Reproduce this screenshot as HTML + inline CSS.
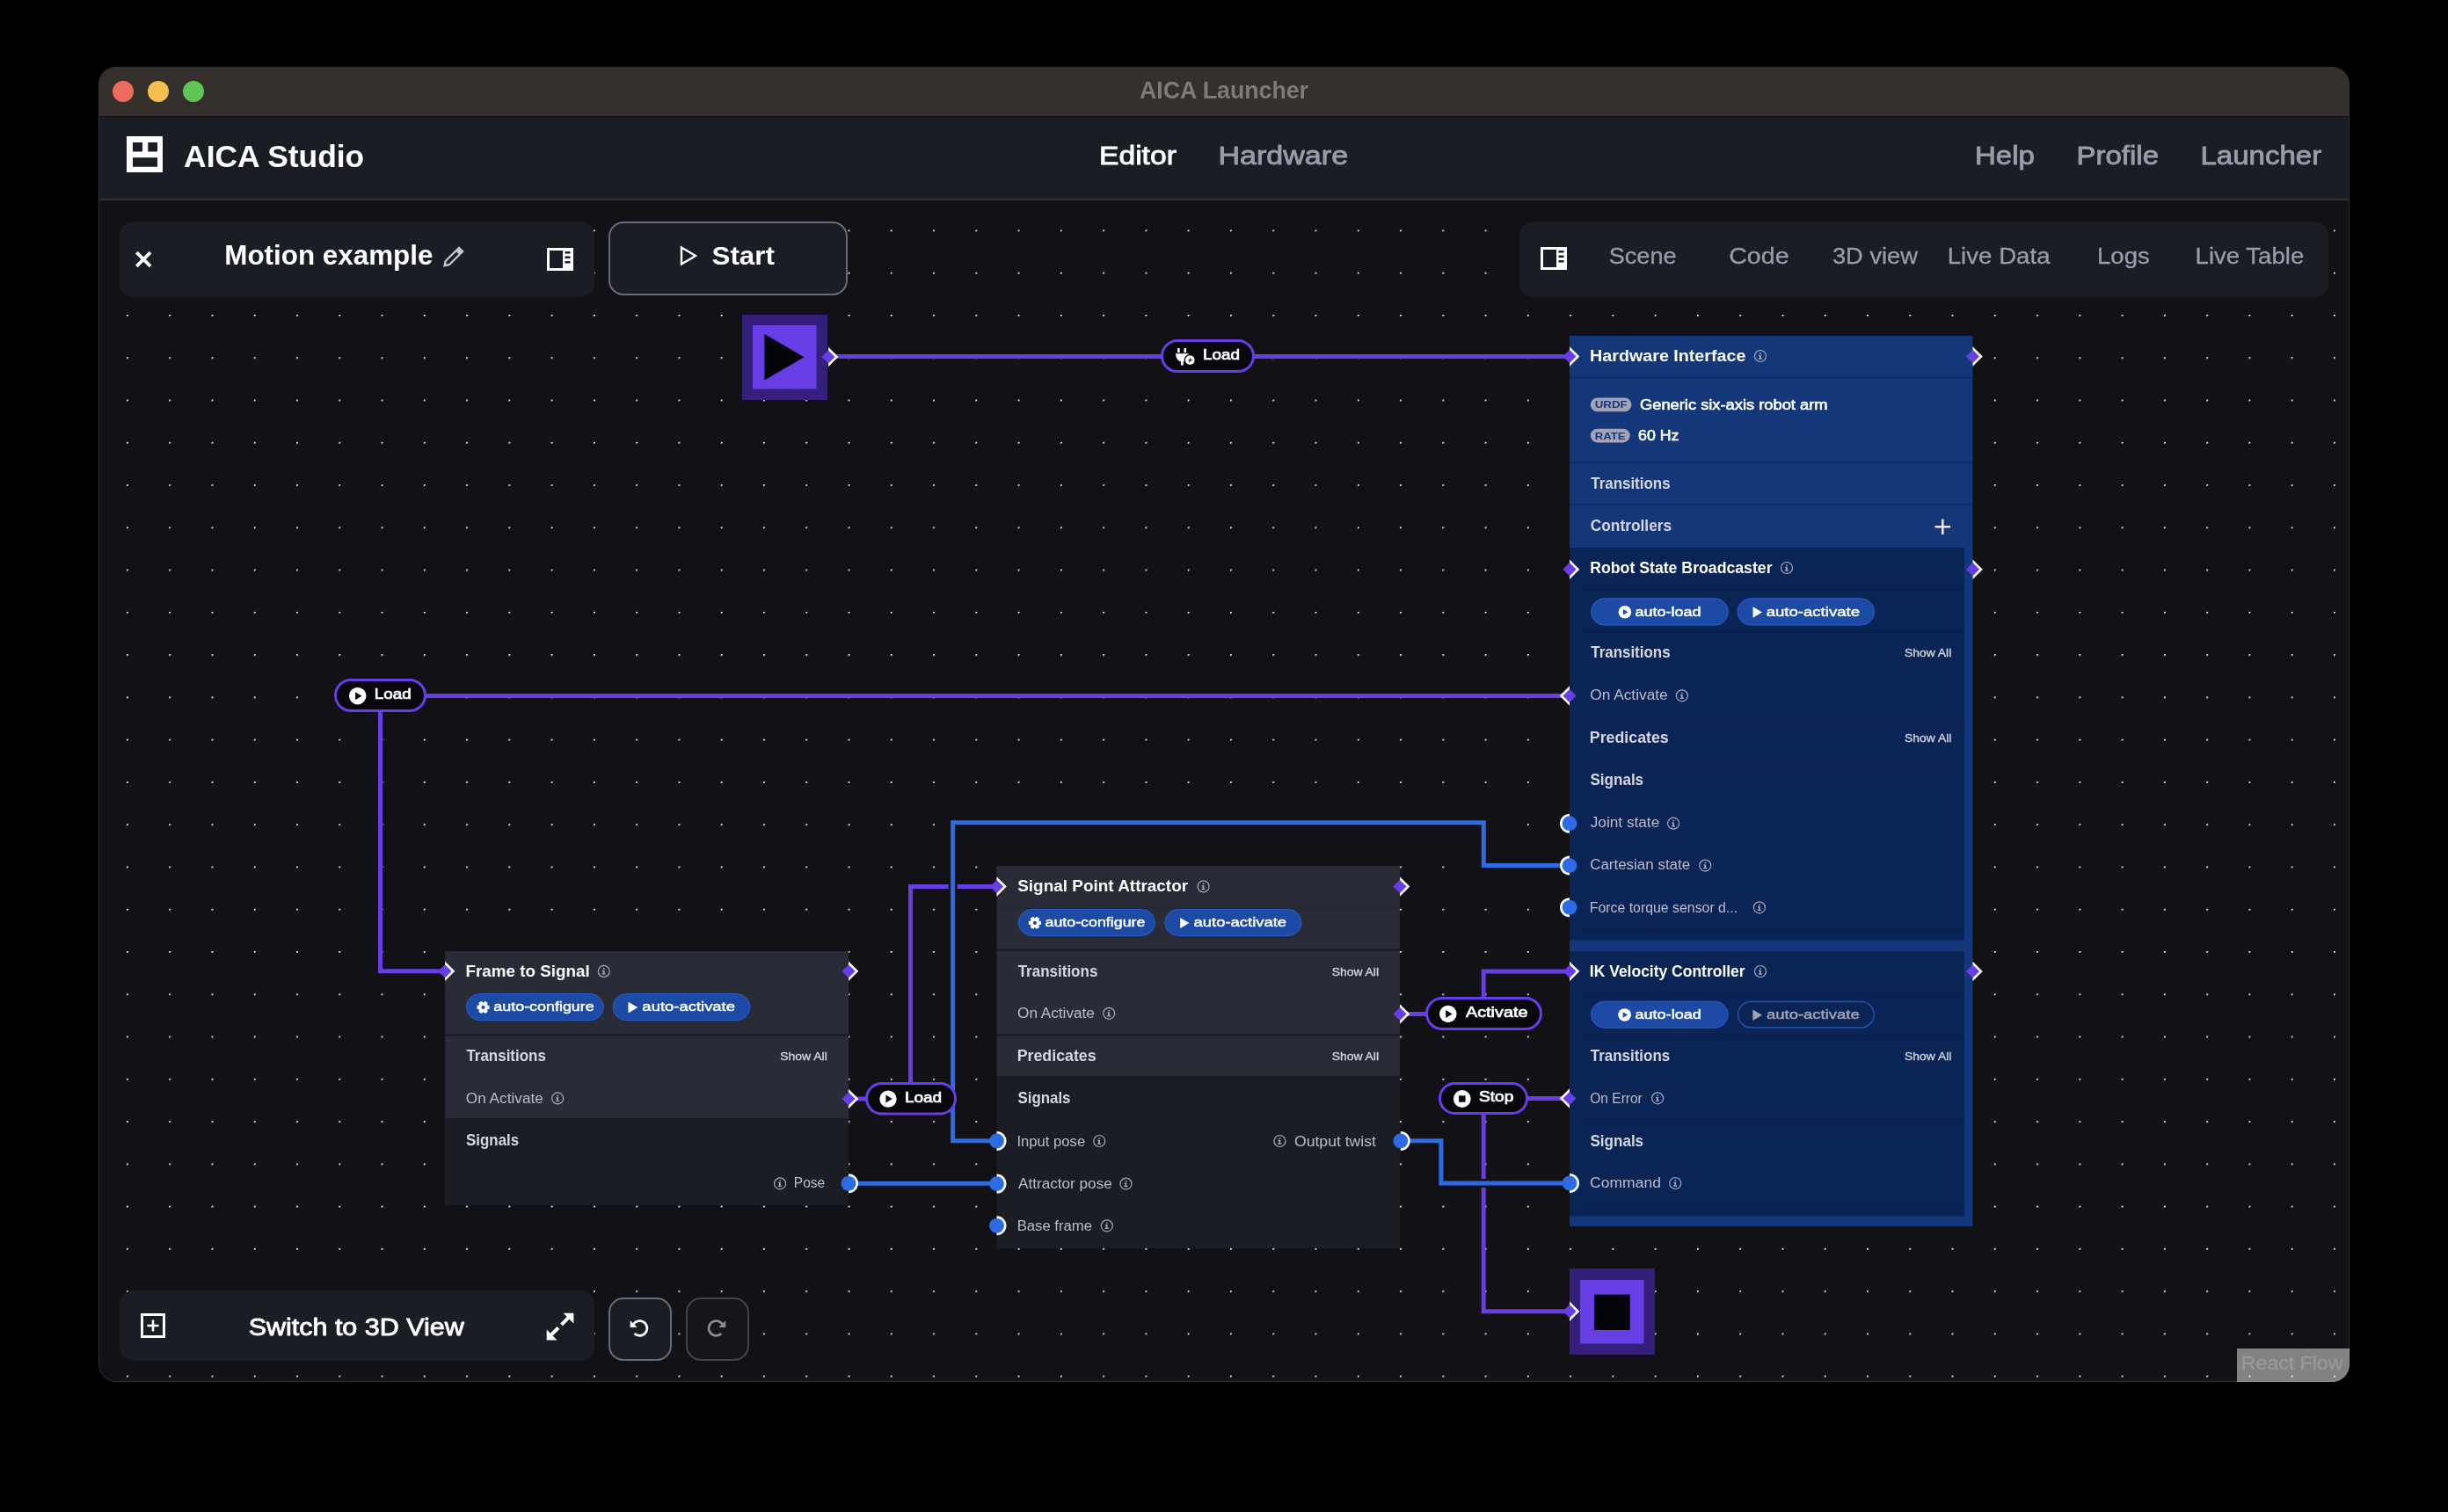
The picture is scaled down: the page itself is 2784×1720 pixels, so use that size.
<!DOCTYPE html><html><head><meta charset="utf-8"><style>html,body{margin:0;padding:0;background:#000;overflow:hidden}svg{display:block;will-change:transform}text{font-family:"Liberation Sans",sans-serif}</style></head><body>
<svg width="2784" height="1720" viewBox="0 0 2784 1720">
<defs>
<clipPath id="win"><rect x="112" y="76" width="2560" height="1496" rx="20"/></clipPath>
<pattern id="dots" x="144" y="358" width="48.27" height="48.27" patternUnits="userSpaceOnUse"><rect x="0" y="0" width="2" height="1" fill="#e8e8e8"/><rect x="0" y="1" width="1" height="1" fill="#e8e8e8"/><rect x="1" y="1" width="1" height="1" fill="#e8e8e8" fill-opacity="0.4"/></pattern>
</defs>
<rect x="0" y="0" width="2784.00" height="1720.00" fill="#000000"/>
<g clip-path="url(#win)">
<rect x="112" y="76" width="2560.00" height="57.00" fill="#36302d"/>
<rect x="112" y="76" width="2560.00" height="1.00" fill="#5b5652"/>
<rect x="112" y="132" width="2560.00" height="1.00" fill="#0c0c0c"/>
<rect x="112" y="133" width="2560.00" height="93.00" fill="#1b1d25"/>
<rect x="112" y="226" width="2560.00" height="2.00" fill="#2c2e38"/>
<rect x="112" y="228" width="2560.00" height="1344.00" fill="#111116"/>
<rect x="112" y="228" width="2560.00" height="1344.00" fill="url(#dots)"/>
</g>
<rect x="112.5" y="76.5" width="2559" height="1495" rx="20" fill="none" stroke="#2e2d31" stroke-width="1"/>
<circle cx="140" cy="104" r="12" fill="#ec6a5e"/>
<circle cx="180" cy="104" r="12" fill="#f4bf4f"/>
<circle cx="220" cy="104" r="12" fill="#61c554"/>
<text x="1295.93" y="111.90" font-size="27.47" font-weight="bold" fill="#7d7a77" textLength="192.10" lengthAdjust="spacingAndGlyphs">AICA Launcher</text>
<path fill="#fff" fill-rule="evenodd" d="M144 155h41v41h-41z M151 162v10.5h11v-10.5z M168.3 162v10.5h10.7v-10.5z M151 179.3v10.5h28v-10.5z"/>
<text x="209.12" y="190.40" font-size="35.76" font-weight="bold" fill="#fff" textLength="205.12" lengthAdjust="spacingAndGlyphs">AICA Studio</text>
<text x="1249.96" y="186.75" font-size="29.65" fill="#fff" stroke="#fff" stroke-width="0.90" stroke-linejoin="round" textLength="87.98" lengthAdjust="spacingAndGlyphs">Editor</text>
<text x="1385.43" y="186.75" font-size="29.65" fill="#9b9aab" stroke="#9b9aab" stroke-width="0.90" stroke-linejoin="round" textLength="147.66" lengthAdjust="spacingAndGlyphs">Hardware</text>
<text x="2246.01" y="186.55" font-size="29.65" fill="#9b9aab" stroke="#9b9aab" stroke-width="0.90" stroke-linejoin="round" textLength="67.92" lengthAdjust="spacingAndGlyphs">Help</text>
<text x="2361.51" y="186.55" font-size="29.65" fill="#9b9aab" stroke="#9b9aab" stroke-width="0.90" stroke-linejoin="round" textLength="93.51" lengthAdjust="spacingAndGlyphs">Profile</text>
<text x="2502.51" y="186.55" font-size="29.65" fill="#9b9aab" stroke="#9b9aab" stroke-width="0.90" stroke-linejoin="round" textLength="137.70" lengthAdjust="spacingAndGlyphs">Launcher</text>
<rect x="136" y="252" width="540.00" height="86.00" rx="16" fill="#1b1d25"/>
<path d="M155.3 287.1 L171.1 302.9 M171.1 287.1 L155.3 302.9" stroke="#fff" stroke-width="3.8" stroke-linecap="butt"/>
<text x="255.26" y="301.30" font-size="31.69" font-weight="bold" fill="#fff" textLength="237.20" lengthAdjust="spacingAndGlyphs">Motion example</text>
<path fill="#c2c1cf" fill-rule="evenodd" d="M504 303.8 L505.6 296.4 L522 280.2 L527.8 285.9 L511.6 302.1 Z M507.3 300.4 L507.7 297.4 L519 286.6 L521.6 288.9 L510.5 300 Z"/>
<g><rect x="623.5" y="283.5" width="27" height="23" fill="none" stroke="#fff" stroke-width="3"/><rect x="640" y="282" width="12" height="26" fill="#fff"/><rect x="642.5" y="286" width="6" height="2.5" fill="#1b1d25"/><rect x="642.5" y="291.5" width="6" height="2.5" fill="#1b1d25"/><rect x="642.5" y="297" width="6" height="2.5" fill="#1b1d25"/></g>
<rect x="693" y="253" width="270" height="82" rx="16" fill="#1b1d25" stroke="#6a697a" stroke-width="2"/>
<path d="M775 281.5 L791 291 L775 300.5 Z" fill="none" stroke="#fff" stroke-width="2.4" stroke-linejoin="miter"/>
<text x="809.56" y="301.30" font-size="29.51" font-weight="bold" fill="#fff" textLength="71.26" lengthAdjust="spacingAndGlyphs">Start</text>
<rect x="1728" y="252" width="920.00" height="86.00" rx="16" fill="#1b1d25"/>
<g><rect x="1753.5" y="282.5" width="27" height="23" fill="none" stroke="#fff" stroke-width="3"/><rect x="1770" y="281" width="12" height="26" fill="#fff"/><rect x="1772.5" y="285" width="6" height="2.5" fill="#1b1d25"/><rect x="1772.5" y="290.5" width="6" height="2.5" fill="#1b1d25"/><rect x="1772.5" y="296" width="6" height="2.5" fill="#1b1d25"/></g>
<text x="1829.73" y="299.95" font-size="26.31" fill="#9b9aab" stroke="#9b9aab" stroke-width="0.30" stroke-linejoin="round" textLength="76.85" lengthAdjust="spacingAndGlyphs">Scene</text>
<text x="1966.22" y="299.95" font-size="26.31" fill="#9b9aab" stroke="#9b9aab" stroke-width="0.30" stroke-linejoin="round" textLength="68.34" lengthAdjust="spacingAndGlyphs">Code</text>
<text x="2083.96" y="299.95" font-size="26.31" fill="#9b9aab" stroke="#9b9aab" stroke-width="0.30" stroke-linejoin="round" textLength="97.00" lengthAdjust="spacingAndGlyphs">3D view</text>
<text x="2214.74" y="299.95" font-size="26.31" fill="#9b9aab" stroke="#9b9aab" stroke-width="0.30" stroke-linejoin="round" textLength="116.80" lengthAdjust="spacingAndGlyphs">Live Data</text>
<text x="2385.05" y="299.95" font-size="26.31" fill="#9b9aab" stroke="#9b9aab" stroke-width="0.30" stroke-linejoin="round" textLength="59.73" lengthAdjust="spacingAndGlyphs">Logs</text>
<text x="2496.54" y="299.95" font-size="26.31" fill="#9b9aab" stroke="#9b9aab" stroke-width="0.30" stroke-linejoin="round" textLength="123.75" lengthAdjust="spacingAndGlyphs">Live Table</text>
<rect x="136" y="1468" width="540.00" height="80.00" rx="16" fill="#1b1d25"/>
<rect x="161.5" y="1495.5" width="25" height="25" fill="none" stroke="#fff" stroke-width="3"/>
<path d="M174 1501.5v13M167.5 1508h13" stroke="#fff" stroke-width="2.6"/>
<text x="282.68" y="1518.95" font-size="28.34" fill="#fff" stroke="#fff" stroke-width="0.90" stroke-linejoin="round" textLength="245.04" lengthAdjust="spacingAndGlyphs">Switch to 3D View</text>
<g fill="#fff"><path d="M640.6 1493.7 H652.4 V1505.5 Z"/><path d="M621.7 1512.6 V1524.4 H633.5 Z"/></g>
<path d="M638.6 1506.8 L646.5 1498.9 M634.9 1510.5 L627 1518.4" stroke="#fff" stroke-width="4"/>
<rect x="693" y="1477" width="70" height="70" rx="16" fill="#1b1d25" stroke="#6a697a" stroke-width="2"/>
<rect x="781" y="1477" width="70" height="70" rx="16" fill="#15161c" stroke="#42414c" stroke-width="2"/>
<path d="M720.23 1506.80 A8.4 8.4 0 1 1 721.56 1516.94" fill="none" stroke="#fff" stroke-width="2.7"/>
<path d="M716.7 1502.3 V1510 H724.7 Z" fill="#fff"/>
<path d="M821.72 1506.80 A8.4 8.4 0 1 0 820.39 1516.94" fill="none" stroke="#8c8c8c" stroke-width="2.7"/>
<path d="M825.25 1502.3 V1510 H817.25 Z" fill="#8c8c8c"/>
<path d="M2544 1534 H2672 V1552 A20 20 0 0 1 2652 1572 H2544 Z" fill="#ffffff" fill-opacity="0.48"/>
<text x="2548.85" y="1557.80" font-size="21.22" fill="#999999" stroke="#999999" stroke-width="0.40" stroke-linejoin="round" textLength="115.57" lengthAdjust="spacingAndGlyphs">React Flow</text>
<g fill="none" stroke="#673de6" stroke-width="5" stroke-linejoin="miter" stroke-linecap="butt">
<path d="M942 405.5 H1785"/>
<path d="M1785 791.5 H432.5 V1104.7 H506"/>
<path d="M965 1250 H1035.5 V1008.5 H1133.5"/>
<path d="M1592 1153.5 H1687.2 V1105 H1785"/>
<path d="M1785 1249.5 H1687.2 V1491.7 H1785"/>
</g>
<g fill="none" stroke="#111116" stroke-width="10" stroke-linejoin="miter">
<path d="M1785 984.6 H1687.3 V935.7 H1083.6 V1297.8 H1133.5"/>
<path d="M965 1346.3 H1133.5"/>
<path d="M1592.8 1297.8 H1638.9 V1345.9 H1785"/>
</g>
<g fill="none" stroke="#2d6be4" stroke-width="5" stroke-linejoin="miter">
<path d="M1785 984.6 H1687.3 V935.7 H1083.6 V1297.8 H1133.5"/>
<path d="M965 1346.3 H1133.5"/>
<path d="M1592.8 1297.8 H1638.9 V1345.9 H1785"/>
</g>
<rect x="844" y="358" width="97.00" height="97.00" fill="#341f7a"/>
<rect x="856" y="370" width="72.50" height="72.50" fill="#673de6"/>
<path d="M869.4 380 L914.6 406.2 L869.4 432.4Z" fill="#050409"/>
<rect x="1785" y="1443" width="97.00" height="98.00" fill="#341f7a"/>
<rect x="1797" y="1456" width="72.50" height="72.50" fill="#673de6"/>
<rect x="1813" y="1472.6" width="40.70" height="40.40" fill="#050409"/>
<rect x="506" y="1082" width="459.00" height="191.00" fill="#292b36"/>
<rect x="506" y="1273" width="459.00" height="98.00" fill="#1b1d25"/>
<rect x="506" y="1272.5" width="459.00" height="1.50" fill="#18191f"/>
<rect x="506" y="1129.5" width="459.00" height="1.00" fill="#24262f"/>
<rect x="506" y="1176.5" width="459.00" height="2.00" fill="#18191f"/>
<text x="529.38" y="1110.60" font-size="19.19" font-weight="bold" fill="#ffffff" textLength="141.28" lengthAdjust="spacingAndGlyphs">Frame to Signal</text>
<circle cx="686.8" cy="1104.9" r="6.5" fill="none" stroke="#a9a8ba" stroke-width="1.2"/>
<rect x="686.05" y="1101.20" width="1.6" height="1.5" fill="#a9a8ba"/>
<path d="M684.80 1103.70h2.8v3.7h1.1v1.2h-4.1v-1.2h1.2v-2.5h-1z" fill="#a9a8ba"/>
<rect x="530.5" y="1130.5" width="155.80" height="30.20" rx="15.10" fill="#1c4aa4" stroke="#2a5ccc" stroke-width="1"/>
<path d="M554.48 1143.58 L556.55 1144.01 L556.55 1147.79 L554.48 1148.22 L554.01 1149.05 L554.66 1151.06 L551.39 1152.95 L549.98 1151.38 L549.02 1151.38 L547.61 1152.95 L544.34 1151.06 L544.99 1149.05 L544.52 1148.22 L542.45 1147.79 L542.45 1144.01 L544.52 1143.58 L544.99 1142.75 L544.34 1140.74 L547.61 1138.85 L549.02 1140.42 L549.98 1140.42 L551.39 1138.85 L554.66 1140.74 L554.01 1142.75Z M551.60 1145.90 A2.1 2.1 0 1 0 547.40 1145.90 A2.1 2.1 0 1 0 551.60 1145.90Z" fill="#fff" fill-rule="evenodd"/>
<text x="561.31" y="1149.88" font-size="14.75" fill="#fff" stroke="#fff" stroke-width="0.45" stroke-linejoin="round" textLength="114.43" lengthAdjust="spacingAndGlyphs">auto-configure</text>
<rect x="697.1" y="1130.5" width="155.90" height="30.20" rx="15.10" fill="#1c4aa4" stroke="#2a5ccc" stroke-width="1"/>
<path d="M714.50 1139.73 L725.30 1146.10 L714.50 1152.47Z" fill="#fff"/>
<text x="730.39" y="1149.88" font-size="14.75" fill="#fff" stroke="#fff" stroke-width="0.45" stroke-linejoin="round" textLength="105.63" lengthAdjust="spacingAndGlyphs">auto-activate</text>
<text x="530.43" y="1206.90" font-size="17.73" font-weight="bold" fill="#d6d6e0" textLength="90.44" lengthAdjust="spacingAndGlyphs">Transitions</text>
<text x="887.25" y="1206.23" font-size="13.44" fill="#d3d3dc" stroke="#d3d3dc" stroke-width="0.35" stroke-linejoin="round" textLength="53.49" lengthAdjust="spacingAndGlyphs">Show All</text>
<text x="529.83" y="1254.50" font-size="16.42" fill="#bcbcc9" textLength="88.03" lengthAdjust="spacingAndGlyphs">On Activate</text>
<circle cx="634.2" cy="1249.4" r="6.5" fill="none" stroke="#a9a8ba" stroke-width="1.2"/>
<rect x="633.45" y="1245.70" width="1.6" height="1.5" fill="#a9a8ba"/>
<path d="M632.20 1248.20h2.8v3.7h1.1v1.2h-4.1v-1.2h1.2v-2.5h-1z" fill="#a9a8ba"/>
<text x="530.09" y="1303.30" font-size="17.73" font-weight="bold" fill="#d6d6e0" textLength="60.01" lengthAdjust="spacingAndGlyphs">Signals</text>
<text x="902.86" y="1350.90" font-size="16.42" fill="#bcbcc9" textLength="35.33" lengthAdjust="spacingAndGlyphs">Pose</text>
<circle cx="887.1" cy="1346.3" r="6.5" fill="none" stroke="#a9a8ba" stroke-width="1.2"/>
<rect x="886.35" y="1342.60" width="1.6" height="1.5" fill="#a9a8ba"/>
<path d="M885.10 1345.10h2.8v3.7h1.1v1.2h-4.1v-1.2h1.2v-2.5h-1z" fill="#a9a8ba"/>
<rect x="1133.5" y="985" width="458.50" height="240.00" fill="#292b36"/>
<rect x="1133.5" y="1225" width="458.50" height="195.00" fill="#1b1d25"/>
<rect x="1133.5" y="1224.3" width="458.50" height="1.50" fill="#18191f"/>
<rect x="1133.5" y="1032.8" width="458.50" height="1.00" fill="#24262f"/>
<rect x="1133.5" y="1079.5" width="458.50" height="2.00" fill="#18191f"/>
<rect x="1133.5" y="1176.5" width="458.50" height="2.00" fill="#18191f"/>
<text x="1157.23" y="1013.90" font-size="19.19" font-weight="bold" fill="#ffffff" textLength="193.88" lengthAdjust="spacingAndGlyphs">Signal Point Attractor</text>
<circle cx="1368.6" cy="1008.4" r="6.5" fill="none" stroke="#a9a8ba" stroke-width="1.2"/>
<rect x="1367.85" y="1004.70" width="1.6" height="1.5" fill="#a9a8ba"/>
<path d="M1366.60 1007.20h2.8v3.7h1.1v1.2h-4.1v-1.2h1.2v-2.5h-1z" fill="#a9a8ba"/>
<rect x="1158.3" y="1034.5" width="155.20" height="30.00" rx="15.00" fill="#1c4aa4" stroke="#2a5ccc" stroke-width="1"/>
<path d="M1181.88 1047.48 L1183.95 1047.91 L1183.95 1051.69 L1181.88 1052.12 L1181.41 1052.95 L1182.06 1054.96 L1178.79 1056.85 L1177.38 1055.28 L1176.42 1055.28 L1175.01 1056.85 L1171.74 1054.96 L1172.39 1052.95 L1171.92 1052.12 L1169.85 1051.69 L1169.85 1047.91 L1171.92 1047.48 L1172.39 1046.65 L1171.74 1044.64 L1175.01 1042.75 L1176.42 1044.32 L1177.38 1044.32 L1178.79 1042.75 L1182.06 1044.64 L1181.41 1046.65Z M1179.00 1049.80 A2.1 2.1 0 1 0 1174.80 1049.80 A2.1 2.1 0 1 0 1179.00 1049.80Z" fill="#fff" fill-rule="evenodd"/>
<text x="1188.51" y="1053.68" font-size="14.75" fill="#fff" stroke="#fff" stroke-width="0.45" stroke-linejoin="round" textLength="113.92" lengthAdjust="spacingAndGlyphs">auto-configure</text>
<rect x="1324.7" y="1034.5" width="155.30" height="30.00" rx="15.00" fill="#1c4aa4" stroke="#2a5ccc" stroke-width="1"/>
<path d="M1342.20 1043.98 L1352.40 1050.00 L1342.20 1056.02Z" fill="#fff"/>
<text x="1357.49" y="1053.68" font-size="14.75" fill="#fff" stroke="#fff" stroke-width="0.45" stroke-linejoin="round" textLength="105.63" lengthAdjust="spacingAndGlyphs">auto-activate</text>
<text x="1157.63" y="1110.50" font-size="17.73" font-weight="bold" fill="#d6d6e0" textLength="90.74" lengthAdjust="spacingAndGlyphs">Transitions</text>
<text x="1514.75" y="1109.83" font-size="13.44" fill="#d3d3dc" stroke="#d3d3dc" stroke-width="0.35" stroke-linejoin="round" textLength="53.29" lengthAdjust="spacingAndGlyphs">Show All</text>
<text x="1157.03" y="1157.90" font-size="16.42" fill="#bcbcc9" textLength="87.93" lengthAdjust="spacingAndGlyphs">On Activate</text>
<circle cx="1261.2" cy="1152.8" r="6.5" fill="none" stroke="#a9a8ba" stroke-width="1.2"/>
<rect x="1260.45" y="1149.10" width="1.6" height="1.5" fill="#a9a8ba"/>
<path d="M1259.20 1151.60h2.8v3.7h1.1v1.2h-4.1v-1.2h1.2v-2.5h-1z" fill="#a9a8ba"/>
<text x="1156.64" y="1206.90" font-size="17.73" font-weight="bold" fill="#d6d6e0" textLength="90.05" lengthAdjust="spacingAndGlyphs">Predicates</text>
<text x="1514.75" y="1206.23" font-size="13.44" fill="#d3d3dc" stroke="#d3d3dc" stroke-width="0.35" stroke-linejoin="round" textLength="53.29" lengthAdjust="spacingAndGlyphs">Show All</text>
<text x="1157.49" y="1255.20" font-size="17.73" font-weight="bold" fill="#d6d6e0" textLength="60.01" lengthAdjust="spacingAndGlyphs">Signals</text>
<text x="1156.50" y="1303.70" font-size="16.42" fill="#bcbcc9" textLength="77.65" lengthAdjust="spacingAndGlyphs">Input pose</text>
<circle cx="1250.2" cy="1298" r="6.5" fill="none" stroke="#a9a8ba" stroke-width="1.2"/>
<rect x="1249.45" y="1294.30" width="1.6" height="1.5" fill="#a9a8ba"/>
<path d="M1248.20 1296.80h2.8v3.7h1.1v1.2h-4.1v-1.2h1.2v-2.5h-1z" fill="#a9a8ba"/>
<text x="1472.01" y="1303.70" font-size="16.42" fill="#bcbcc9" textLength="92.86" lengthAdjust="spacingAndGlyphs">Output twist</text>
<circle cx="1455.4" cy="1298" r="6.5" fill="none" stroke="#a9a8ba" stroke-width="1.2"/>
<rect x="1454.65" y="1294.30" width="1.6" height="1.5" fill="#a9a8ba"/>
<path d="M1453.40 1296.80h2.8v3.7h1.1v1.2h-4.1v-1.2h1.2v-2.5h-1z" fill="#a9a8ba"/>
<text x="1158.00" y="1351.90" font-size="16.42" fill="#bcbcc9" textLength="106.78" lengthAdjust="spacingAndGlyphs">Attractor pose</text>
<circle cx="1280.5" cy="1346.6" r="6.5" fill="none" stroke="#a9a8ba" stroke-width="1.2"/>
<rect x="1279.75" y="1342.90" width="1.6" height="1.5" fill="#a9a8ba"/>
<path d="M1278.50 1345.40h2.8v3.7h1.1v1.2h-4.1v-1.2h1.2v-2.5h-1z" fill="#a9a8ba"/>
<text x="1156.66" y="1399.70" font-size="16.42" fill="#bcbcc9" textLength="85.34" lengthAdjust="spacingAndGlyphs">Base frame</text>
<circle cx="1258.8" cy="1394.3" r="6.5" fill="none" stroke="#a9a8ba" stroke-width="1.2"/>
<rect x="1258.05" y="1390.60" width="1.6" height="1.5" fill="#a9a8ba"/>
<path d="M1256.80 1393.10h2.8v3.7h1.1v1.2h-4.1v-1.2h1.2v-2.5h-1z" fill="#a9a8ba"/>
<rect x="1785" y="382" width="458.50" height="1013.00" fill="#14377a"/>
<rect x="1785" y="428.5" width="458.50" height="2.00" fill="#0f2b63"/>
<rect x="1785" y="525" width="458.50" height="2.00" fill="#0f2b63"/>
<rect x="1785" y="573" width="458.50" height="2.00" fill="#0f2b63"/>
<text x="1808.12" y="410.80" font-size="19.19" font-weight="bold" fill="#ffffff" textLength="177.25" lengthAdjust="spacingAndGlyphs">Hardware Interface</text>
<circle cx="2002" cy="405" r="6.5" fill="none" stroke="#a9a8ba" stroke-width="1.2"/>
<rect x="2001.25" y="401.30" width="1.6" height="1.5" fill="#a9a8ba"/>
<path d="M2000.00 403.80h2.8v3.7h1.1v1.2h-4.1v-1.2h1.2v-2.5h-1z" fill="#a9a8ba"/>
<rect x="1808.8" y="452.5" width="46.6" height="15.7" rx="7.85" fill="#a4a3b5"/>
<text x="1813.70" y="463.90" font-size="10.76" font-weight="bold" fill="#14377a" textLength="37.00" lengthAdjust="spacingAndGlyphs">URDF</text>
<text x="1864.99" y="465.70" font-size="16.42" fill="#fff" stroke="#fff" stroke-width="0.60" stroke-linejoin="round" textLength="213.51" lengthAdjust="spacingAndGlyphs">Generic six-axis robot arm</text>
<rect x="1808.8" y="487.8" width="44.9" height="15.6" rx="7.8" fill="#a4a3b5"/>
<text x="1813.85" y="499.80" font-size="10.76" font-weight="bold" fill="#14377a" textLength="34.65" lengthAdjust="spacingAndGlyphs">RATE</text>
<text x="1863.11" y="500.60" font-size="15.99" fill="#fff" stroke="#fff" stroke-width="0.60" stroke-linejoin="round" textLength="46.31" lengthAdjust="spacingAndGlyphs">60 Hz</text>
<text x="1809.23" y="555.60" font-size="17.73" font-weight="bold" fill="#d6d6e0" textLength="90.34" lengthAdjust="spacingAndGlyphs">Transitions</text>
<text x="1808.71" y="603.70" font-size="17.73" font-weight="bold" fill="#d6d6e0" textLength="92.47" lengthAdjust="spacingAndGlyphs">Controllers</text>
<path d="M2209.3 590.5 V608.1 M2200.5 599.3 H2218.1" stroke="#e6e6ee" stroke-width="2.6"/>
<rect x="1785" y="623" width="449.00" height="446.50" fill="#0b2456"/>
<rect x="1795" y="670.5" width="439.00" height="1.00" fill="#0a1e48"/>
<rect x="1795" y="719" width="439.00" height="1.00" fill="#0a1e48"/>
<rect x="1795" y="815.8" width="439.00" height="1.00" fill="#0a1e48"/>
<rect x="1795" y="863.6" width="439.00" height="1.00" fill="#0a1e48"/>
<rect x="1795" y="1056.5" width="439.00" height="1.00" fill="#0a1e48"/>
<text x="1808.25" y="652.40" font-size="19.19" font-weight="bold" fill="#ffffff" textLength="207.31" lengthAdjust="spacingAndGlyphs">Robot State Broadcaster</text>
<circle cx="2032" cy="646" r="6.5" fill="none" stroke="#a9a8ba" stroke-width="1.2"/>
<rect x="2031.25" y="642.30" width="1.6" height="1.5" fill="#a9a8ba"/>
<path d="M2030.00 644.80h2.8v3.7h1.1v1.2h-4.1v-1.2h1.2v-2.5h-1z" fill="#a9a8ba"/>
<rect x="1809.5" y="680.8" width="155.90" height="30.30" rx="15.15" fill="#1c4aa4" stroke="#2a5ccc" stroke-width="1"/>
<circle cx="1847.9" cy="696.25" r="7.3" fill="#fff"/>
<path d="M1845.95 692.88 L1851.49 696.25 L1845.95 699.62Z" fill="#1c4aa4"/>
<text x="1859.51" y="700.68" font-size="14.75" fill="#fff" stroke="#fff" stroke-width="0.45" stroke-linejoin="round" textLength="75.04" lengthAdjust="spacingAndGlyphs">auto-load</text>
<rect x="1976.0" y="680.8" width="155.60" height="30.30" rx="15.15" fill="#1c4aa4" stroke="#2a5ccc" stroke-width="1"/>
<path d="M1993.50 690.25 L2004.00 696.45 L1993.50 702.65Z" fill="#fff"/>
<text x="2008.68" y="700.68" font-size="14.75" fill="#fff" stroke="#fff" stroke-width="0.45" stroke-linejoin="round" textLength="106.34" lengthAdjust="spacingAndGlyphs">auto-activate</text>
<text x="1809.23" y="748.30" font-size="17.73" font-weight="bold" fill="#d6d6e0" textLength="90.34" lengthAdjust="spacingAndGlyphs">Transitions</text>
<text x="2165.95" y="746.93" font-size="13.44" fill="#d3d3dc" stroke="#d3d3dc" stroke-width="0.35" stroke-linejoin="round" textLength="53.29" lengthAdjust="spacingAndGlyphs">Show All</text>
<text x="1808.22" y="796.20" font-size="16.42" fill="#bcbcc9" textLength="88.54" lengthAdjust="spacingAndGlyphs">On Activate</text>
<circle cx="1912.9" cy="791.3" r="6.5" fill="none" stroke="#a9a8ba" stroke-width="1.2"/>
<rect x="1912.15" y="787.60" width="1.6" height="1.5" fill="#a9a8ba"/>
<path d="M1910.90 790.10h2.8v3.7h1.1v1.2h-4.1v-1.2h1.2v-2.5h-1z" fill="#a9a8ba"/>
<text x="1807.84" y="844.50" font-size="17.73" font-weight="bold" fill="#d6d6e0" textLength="89.94" lengthAdjust="spacingAndGlyphs">Predicates</text>
<text x="2166.05" y="843.73" font-size="13.44" fill="#d3d3dc" stroke="#d3d3dc" stroke-width="0.35" stroke-linejoin="round" textLength="53.29" lengthAdjust="spacingAndGlyphs">Show All</text>
<text x="1808.49" y="893.30" font-size="17.73" font-weight="bold" fill="#d6d6e0" textLength="60.62" lengthAdjust="spacingAndGlyphs">Signals</text>
<text x="1808.74" y="941.20" font-size="16.42" fill="#bcbcc9" textLength="78.49" lengthAdjust="spacingAndGlyphs">Joint state</text>
<circle cx="1903.1" cy="936.7" r="6.5" fill="none" stroke="#a9a8ba" stroke-width="1.2"/>
<rect x="1902.35" y="933.00" width="1.6" height="1.5" fill="#a9a8ba"/>
<path d="M1901.10 935.50h2.8v3.7h1.1v1.2h-4.1v-1.2h1.2v-2.5h-1z" fill="#a9a8ba"/>
<text x="1808.15" y="989.10" font-size="16.42" fill="#bcbcc9" textLength="114.02" lengthAdjust="spacingAndGlyphs">Cartesian state</text>
<circle cx="1939.3" cy="984.6" r="6.5" fill="none" stroke="#a9a8ba" stroke-width="1.2"/>
<rect x="1938.55" y="980.90" width="1.6" height="1.5" fill="#a9a8ba"/>
<path d="M1937.30 983.40h2.8v3.7h1.1v1.2h-4.1v-1.2h1.2v-2.5h-1z" fill="#a9a8ba"/>
<text x="1807.73" y="1037.90" font-size="16.42" fill="#bcbcc9" textLength="168.42" lengthAdjust="spacingAndGlyphs">Force torque sensor d...</text>
<circle cx="2000.9" cy="1032.3" r="6.5" fill="none" stroke="#a9a8ba" stroke-width="1.2"/>
<rect x="2000.15" y="1028.60" width="1.6" height="1.5" fill="#a9a8ba"/>
<path d="M1998.90 1031.10h2.8v3.7h1.1v1.2h-4.1v-1.2h1.2v-2.5h-1z" fill="#a9a8ba"/>
<rect x="1785" y="1082" width="449.00" height="301.50" fill="#0b2456"/>
<rect x="1795" y="1129.8" width="439.00" height="1.00" fill="#0a1e48"/>
<rect x="1795" y="1177.6" width="439.00" height="1.00" fill="#0a1e48"/>
<rect x="1795" y="1274.4" width="439.00" height="1.00" fill="#0a1e48"/>
<rect x="1795" y="1371" width="439.00" height="1.00" fill="#0a1e48"/>
<text x="1807.86" y="1111.30" font-size="19.19" font-weight="bold" fill="#ffffff" textLength="176.77" lengthAdjust="spacingAndGlyphs">IK Velocity Controller</text>
<circle cx="2002" cy="1105" r="6.5" fill="none" stroke="#a9a8ba" stroke-width="1.2"/>
<rect x="2001.25" y="1101.30" width="1.6" height="1.5" fill="#a9a8ba"/>
<path d="M2000.00 1103.80h2.8v3.7h1.1v1.2h-4.1v-1.2h1.2v-2.5h-1z" fill="#a9a8ba"/>
<rect x="1809.5" y="1139.2" width="155.70" height="30.00" rx="15.00" fill="#1c4aa4" stroke="#2a5ccc" stroke-width="1"/>
<circle cx="1847.6" cy="1154.5" r="7.3" fill="#fff"/>
<path d="M1845.65 1151.13 L1851.19 1154.50 L1845.65 1157.87Z" fill="#1c4aa4"/>
<text x="1859.50" y="1158.78" font-size="14.75" fill="#fff" stroke="#fff" stroke-width="0.45" stroke-linejoin="round" textLength="75.25" lengthAdjust="spacingAndGlyphs">auto-load</text>
<rect x="1976.55" y="1139.45" width="154.70" height="29.50" rx="14.75" fill="none" stroke="#2150b0" stroke-width="1.5"/>
<path d="M1993.40 1148.45 L2004.00 1154.70 L1993.40 1160.95Z" fill="#a3a2b3"/>
<text x="2008.99" y="1158.78" font-size="14.75" fill="#a3a2b3" stroke="#a3a2b3" stroke-width="0.45" stroke-linejoin="round" textLength="105.73" lengthAdjust="spacingAndGlyphs">auto-activate</text>
<text x="1808.83" y="1207.30" font-size="17.73" font-weight="bold" fill="#d6d6e0" textLength="90.34" lengthAdjust="spacingAndGlyphs">Transitions</text>
<text x="2166.05" y="1206.42" font-size="13.44" fill="#d3d3dc" stroke="#d3d3dc" stroke-width="0.35" stroke-linejoin="round" textLength="53.29" lengthAdjust="spacingAndGlyphs">Show All</text>
<text x="1808.30" y="1254.50" font-size="16.42" fill="#bcbcc9" textLength="59.50" lengthAdjust="spacingAndGlyphs">On Error</text>
<circle cx="1885.1" cy="1249.3" r="6.5" fill="none" stroke="#a9a8ba" stroke-width="1.2"/>
<rect x="1884.35" y="1245.60" width="1.6" height="1.5" fill="#a9a8ba"/>
<path d="M1883.10 1248.10h2.8v3.7h1.1v1.2h-4.1v-1.2h1.2v-2.5h-1z" fill="#a9a8ba"/>
<text x="1808.49" y="1303.50" font-size="17.73" font-weight="bold" fill="#d6d6e0" textLength="60.62" lengthAdjust="spacingAndGlyphs">Signals</text>
<text x="1808.12" y="1351.10" font-size="16.42" fill="#bcbcc9" textLength="80.77" lengthAdjust="spacingAndGlyphs">Command</text>
<circle cx="1905.3" cy="1346" r="6.5" fill="none" stroke="#a9a8ba" stroke-width="1.2"/>
<rect x="1904.55" y="1342.30" width="1.6" height="1.5" fill="#a9a8ba"/>
<path d="M1903.30 1344.80h2.8v3.7h1.1v1.2h-4.1v-1.2h1.2v-2.5h-1z" fill="#a9a8ba"/>
<path d="M942 394.7 L953.3 406 L942 417.3Z" fill="#fff"/>
<path d="M942 398.4 L949.6 406 L942 413.6 L934.4 406Z" fill="#673de6"/>
<path d="M1785 394.2 L1796.3 405.5 L1785 416.8Z" fill="#fff"/>
<path d="M1785 397.9 L1792.6 405.5 L1785 413.1 L1777.4 405.5Z" fill="#673de6"/>
<path d="M2243.5 394.2 L2254.8 405.5 L2243.5 416.8Z" fill="#fff"/>
<path d="M2243.5 397.9 L2251.1 405.5 L2243.5 413.1 L2235.9 405.5Z" fill="#673de6"/>
<path d="M1785 636.4000000000001 L1796.3 647.7 L1785 659.0Z" fill="#fff"/>
<path d="M1785 640.1 L1792.6 647.7 L1785 655.3000000000001 L1777.4 647.7Z" fill="#673de6"/>
<path d="M2243.5 636.4000000000001 L2254.8 647.7 L2243.5 659.0Z" fill="#fff"/>
<path d="M2243.5 640.1 L2251.1 647.7 L2243.5 655.3000000000001 L2235.9 647.7Z" fill="#673de6"/>
<path d="M1785 780.2 L1773.7 791.5 L1785 802.8Z" fill="#fff"/>
<path d="M1785 783.9 L1792.6 791.5 L1785 799.1 L1777.4 791.5Z" fill="#673de6"/>
<path d="M1785 1093.7 L1796.3 1105 L1785 1116.3Z" fill="#fff"/>
<path d="M1785 1097.4 L1792.6 1105 L1785 1112.6 L1777.4 1105Z" fill="#673de6"/>
<path d="M2243.5 1093.7 L2254.8 1105 L2243.5 1116.3Z" fill="#fff"/>
<path d="M2243.5 1097.4 L2251.1 1105 L2243.5 1112.6 L2235.9 1105Z" fill="#673de6"/>
<path d="M1785 1238.2 L1773.7 1249.5 L1785 1260.8Z" fill="#fff"/>
<path d="M1785 1241.9 L1792.6 1249.5 L1785 1257.1 L1777.4 1249.5Z" fill="#673de6"/>
<path d="M1133.5 997.2 L1144.8 1008.5 L1133.5 1019.8Z" fill="#fff"/>
<path d="M1133.5 1000.9 L1141.1 1008.5 L1133.5 1016.1 L1125.9 1008.5Z" fill="#673de6"/>
<path d="M1592 997.2 L1603.3 1008.5 L1592 1019.8Z" fill="#fff"/>
<path d="M1592 1000.9 L1599.6 1008.5 L1592 1016.1 L1584.4 1008.5Z" fill="#673de6"/>
<path d="M1592 1142.2 L1603.3 1153.5 L1592 1164.8Z" fill="#fff"/>
<path d="M1592 1145.9 L1599.6 1153.5 L1592 1161.1 L1584.4 1153.5Z" fill="#673de6"/>
<path d="M506 1093.5 L517.3 1104.8 L506 1116.1Z" fill="#fff"/>
<path d="M506 1097.2 L513.6 1104.8 L506 1112.3999999999999 L498.4 1104.8Z" fill="#673de6"/>
<path d="M965 1093.5 L976.3 1104.8 L965 1116.1Z" fill="#fff"/>
<path d="M965 1097.2 L972.6 1104.8 L965 1112.3999999999999 L957.4 1104.8Z" fill="#673de6"/>
<path d="M965 1238.7 L976.3 1250 L965 1261.3Z" fill="#fff"/>
<path d="M965 1242.4 L972.6 1250 L965 1257.6 L957.4 1250Z" fill="#673de6"/>
<path d="M1785 1480.4 L1796.3 1491.7 L1785 1503.0Z" fill="#fff"/>
<path d="M1785 1484.1000000000001 L1792.6 1491.7 L1785 1499.3 L1777.4 1491.7Z" fill="#673de6"/>
<path d="M1785 925.7 A11 11 0 0 0 1785 947.7 Z" fill="#fff"/>
<circle cx="1785" cy="936.7" r="8.4" fill="#2d6be4"/>
<path d="M1785 973.6 A11 11 0 0 0 1785 995.6 Z" fill="#fff"/>
<circle cx="1785" cy="984.6" r="8.4" fill="#2d6be4"/>
<path d="M1785 1021.3 A11 11 0 0 0 1785 1043.3 Z" fill="#fff"/>
<circle cx="1785" cy="1032.3" r="8.4" fill="#2d6be4"/>
<path d="M1785 1335 A11 11 0 0 1 1785 1357 Z" fill="#fff"/>
<circle cx="1785" cy="1346" r="8.4" fill="#2d6be4"/>
<path d="M1133.5 1287 A11 11 0 0 1 1133.5 1309 Z" fill="#fff"/>
<circle cx="1133.5" cy="1298" r="8.4" fill="#2d6be4"/>
<path d="M1133.5 1335.6 A11 11 0 0 1 1133.5 1357.6 Z" fill="#fff"/>
<circle cx="1133.5" cy="1346.6" r="8.4" fill="#2d6be4"/>
<path d="M1133.5 1383.3 A11 11 0 0 1 1133.5 1405.3 Z" fill="#fff"/>
<circle cx="1133.5" cy="1394.3" r="8.4" fill="#2d6be4"/>
<path d="M1592.8 1287 A11 11 0 0 1 1592.8 1309 Z" fill="#fff"/>
<circle cx="1592.8" cy="1298" r="8.4" fill="#2d6be4"/>
<path d="M965 1335.3 A11 11 0 0 1 965 1357.3 Z" fill="#fff"/>
<circle cx="965" cy="1346.3" r="8.4" fill="#2d6be4"/>
<rect x="1321.5" y="387.5" width="104.00" height="35.00" rx="17.50" fill="#08070c" stroke="#673de6" stroke-width="3"/>
<g fill="#fff"><rect x="1339.1" y="396.1" width="2.6" height="5"/><rect x="1346.5" y="396.1" width="2.6" height="5"/><path d="M1336.9 402.2 H1351.8 Q1350.8 410.6 1345.8 411.2 V415.6 H1342.9 V411.2 Q1337.9 410.6 1336.9 402.2Z"/></g>
<circle cx="1353.3" cy="409.5" r="6.6" fill="#08070c"/><circle cx="1353.3" cy="409.5" r="5.3" fill="#fff"/>
<path d="M1353.6 406.6 L1354.3 409.1 L1356.5 409.3 L1353.8 410.5 L1352.3 413.1 L1352.5 410.3 L1350.6 409.9 L1353 408.9Z" fill="#08070c"/>
<text x="1368.14" y="408.85" font-size="16.57" fill="#fff" stroke="#fff" stroke-width="0.70" stroke-linejoin="round" textLength="41.93" lengthAdjust="spacingAndGlyphs">Load</text>
<rect x="381.5" y="773.5" width="102.00" height="35.00" rx="17.50" fill="#08070c" stroke="#673de6" stroke-width="3"/>
<circle cx="406.7" cy="791.7" r="9.75" fill="#fff"/>
<path d="M404.10 787.20 L411.50 791.70 L404.10 796.20Z" fill="#08070c"/>
<text x="425.84" y="794.95" font-size="16.72" fill="#fff" stroke="#fff" stroke-width="0.70" stroke-linejoin="round" textLength="42.03" lengthAdjust="spacingAndGlyphs">Load</text>
<rect x="985.5" y="1232.5" width="101.00" height="34.50" rx="17.25" fill="#08070c" stroke="#673de6" stroke-width="3"/>
<circle cx="1010" cy="1250.1" r="9.7" fill="#fff"/>
<path d="M1007.41 1245.62 L1014.78 1250.10 L1007.41 1254.58Z" fill="#08070c"/>
<text x="1029.03" y="1253.65" font-size="16.57" fill="#fff" stroke="#fff" stroke-width="0.70" stroke-linejoin="round" textLength="42.14" lengthAdjust="spacingAndGlyphs">Load</text>
<rect x="1622.5" y="1135.5" width="130.00" height="35.00" rx="17.50" fill="#08070c" stroke="#673de6" stroke-width="3"/>
<circle cx="1646.8" cy="1153.4" r="9.75" fill="#fff"/>
<path d="M1644.20 1148.90 L1651.60 1153.40 L1644.20 1157.90Z" fill="#08070c"/>
<text x="1667.05" y="1157.05" font-size="16.28" fill="#fff" stroke="#fff" stroke-width="0.70" stroke-linejoin="round" textLength="70.33" lengthAdjust="spacingAndGlyphs">Activate</text>
<rect x="1637.5" y="1232.5" width="99.00" height="34.00" rx="17.00" fill="#08070c" stroke="#673de6" stroke-width="3"/>
<circle cx="1662.8" cy="1250" r="9.9" fill="#fff"/>
<rect x="1659.1" y="1246.3" width="7.50" height="7.40" fill="#08070c"/>
<text x="1681.99" y="1253.25" font-size="15.84" fill="#fff" stroke="#fff" stroke-width="0.70" stroke-linejoin="round" textLength="39.37" lengthAdjust="spacingAndGlyphs">Stop</text>
</svg></body></html>
